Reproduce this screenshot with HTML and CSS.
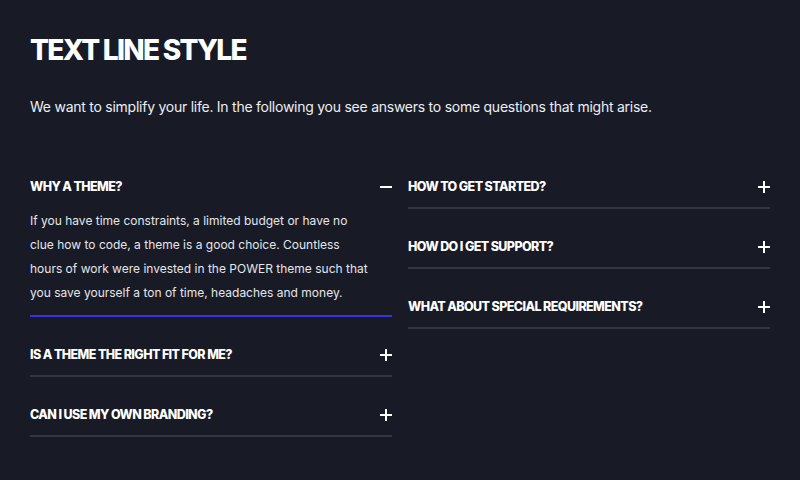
FILE: index.html
```html
<!DOCTYPE html>
<html lang="en">
<head>
  <meta charset="UTF-8" />
  <meta name="viewport" content="width=device-width, initial-scale=1" />
  <title>Text Line Style</title>
  <link rel="stylesheet" href="styles.css">
</head>
<body>
  <div class="container">
    <h1 class="title">TEXT LINE STYLE</h1>
    <p class="intro">We want to simplify your life. In the following you see answers to some questions that might arise.</p>

    <div class="faq-grid">
      <!-- Left column -->
      <div class="faq-col">
        <div class="faq-item open">
          <div class="faq-head">
            <span class="faq-q">WHY A THEME?</span>
            <span class="faq-icon minus"></span>
          </div>
          <div class="faq-answer">
            If you have time constraints, a limited budget or have no clue how to code, a theme is a good choice. Countless hours of work were invested in the POWER theme such that you save yourself a ton of time, headaches and money.
          </div>
        </div>
        <div class="faq-item">
          <div class="faq-head">
            <span class="faq-q">IS A THEME THE RIGHT FIT FOR ME?</span>
            <span class="faq-icon plus"></span>
          </div>
        </div>
        <div class="faq-item">
          <div class="faq-head">
            <span class="faq-q">CAN I USE MY OWN BRANDING?</span>
            <span class="faq-icon plus"></span>
          </div>
        </div>
      </div>

      <!-- Right column -->
      <div class="faq-col">
        <div class="faq-item">
          <div class="faq-head">
            <span class="faq-q">HOW TO GET STARTED?</span>
            <span class="faq-icon plus"></span>
          </div>
        </div>
        <div class="faq-item">
          <div class="faq-head">
            <span class="faq-q">HOW DO I GET SUPPORT?</span>
            <span class="faq-icon plus"></span>
          </div>
        </div>
        <div class="faq-item">
          <div class="faq-head">
            <span class="faq-q">WHAT ABOUT SPECIAL REQUIREMENTS?</span>
            <span class="faq-icon plus"></span>
          </div>
        </div>
      </div>
    </div>
  </div>
</body>
</html>
```

FILE: styles.css
```css
* {
  box-sizing: border-box;
}

body, html {
  margin: 0;
  padding: 0;
  height: 100%;
  background-color: #181b26;
  color: #fff;
  font-family: 'Inter', Arial, sans-serif;
}

.container {
  padding: 33px 30px 0;
}

/* Title */
.title {
  margin: 0;
  font-size: 28px;
  font-weight: 800;
  line-height: 34px;
  letter-spacing: -1.7px;
}

.intro {
  margin: 30px 0 0;
  font-size: 14px;
  line-height: 20px;
  letter-spacing: -0.25px;
  color: #eceef2;
}

/* FAQ grid: two columns */
.faq-grid {
  display: grid;
  grid-template-columns: 1fr 1fr;
  gap: 16px;
  margin-top: 32px;
  align-items: start;
}

.faq-item {
  border-bottom: 2px solid #33363f;
}

.faq-item.open {
  border-bottom-color: #3b2fe3;
}

.faq-head {
  display: flex;
  justify-content: space-between;
  align-items: center;
  padding: 31px 0 13px;
  line-height: 14px;
}

.faq-q {
  font-size: 12.5px;
  font-weight: 800;
  letter-spacing: -0.6px;
}

/* plus / minus icons */
.faq-icon {
  position: relative;
  width: 12px;
  height: 12px;
}
.faq-icon::before,
.faq-icon::after {
  content: "";
  position: absolute;
  background: #fff;
}
.faq-icon::before {
  left: 0;
  top: 5px;
  width: 12px;
  height: 2px;
}
.faq-icon.plus::after {
  left: 5px;
  top: 0;
  width: 2px;
  height: 12px;
}

.faq-answer {
  padding: 2px 20px 10px 0;
  font-size: 12px;
  line-height: 24px;
  color: #e4e6ea;
}
```
